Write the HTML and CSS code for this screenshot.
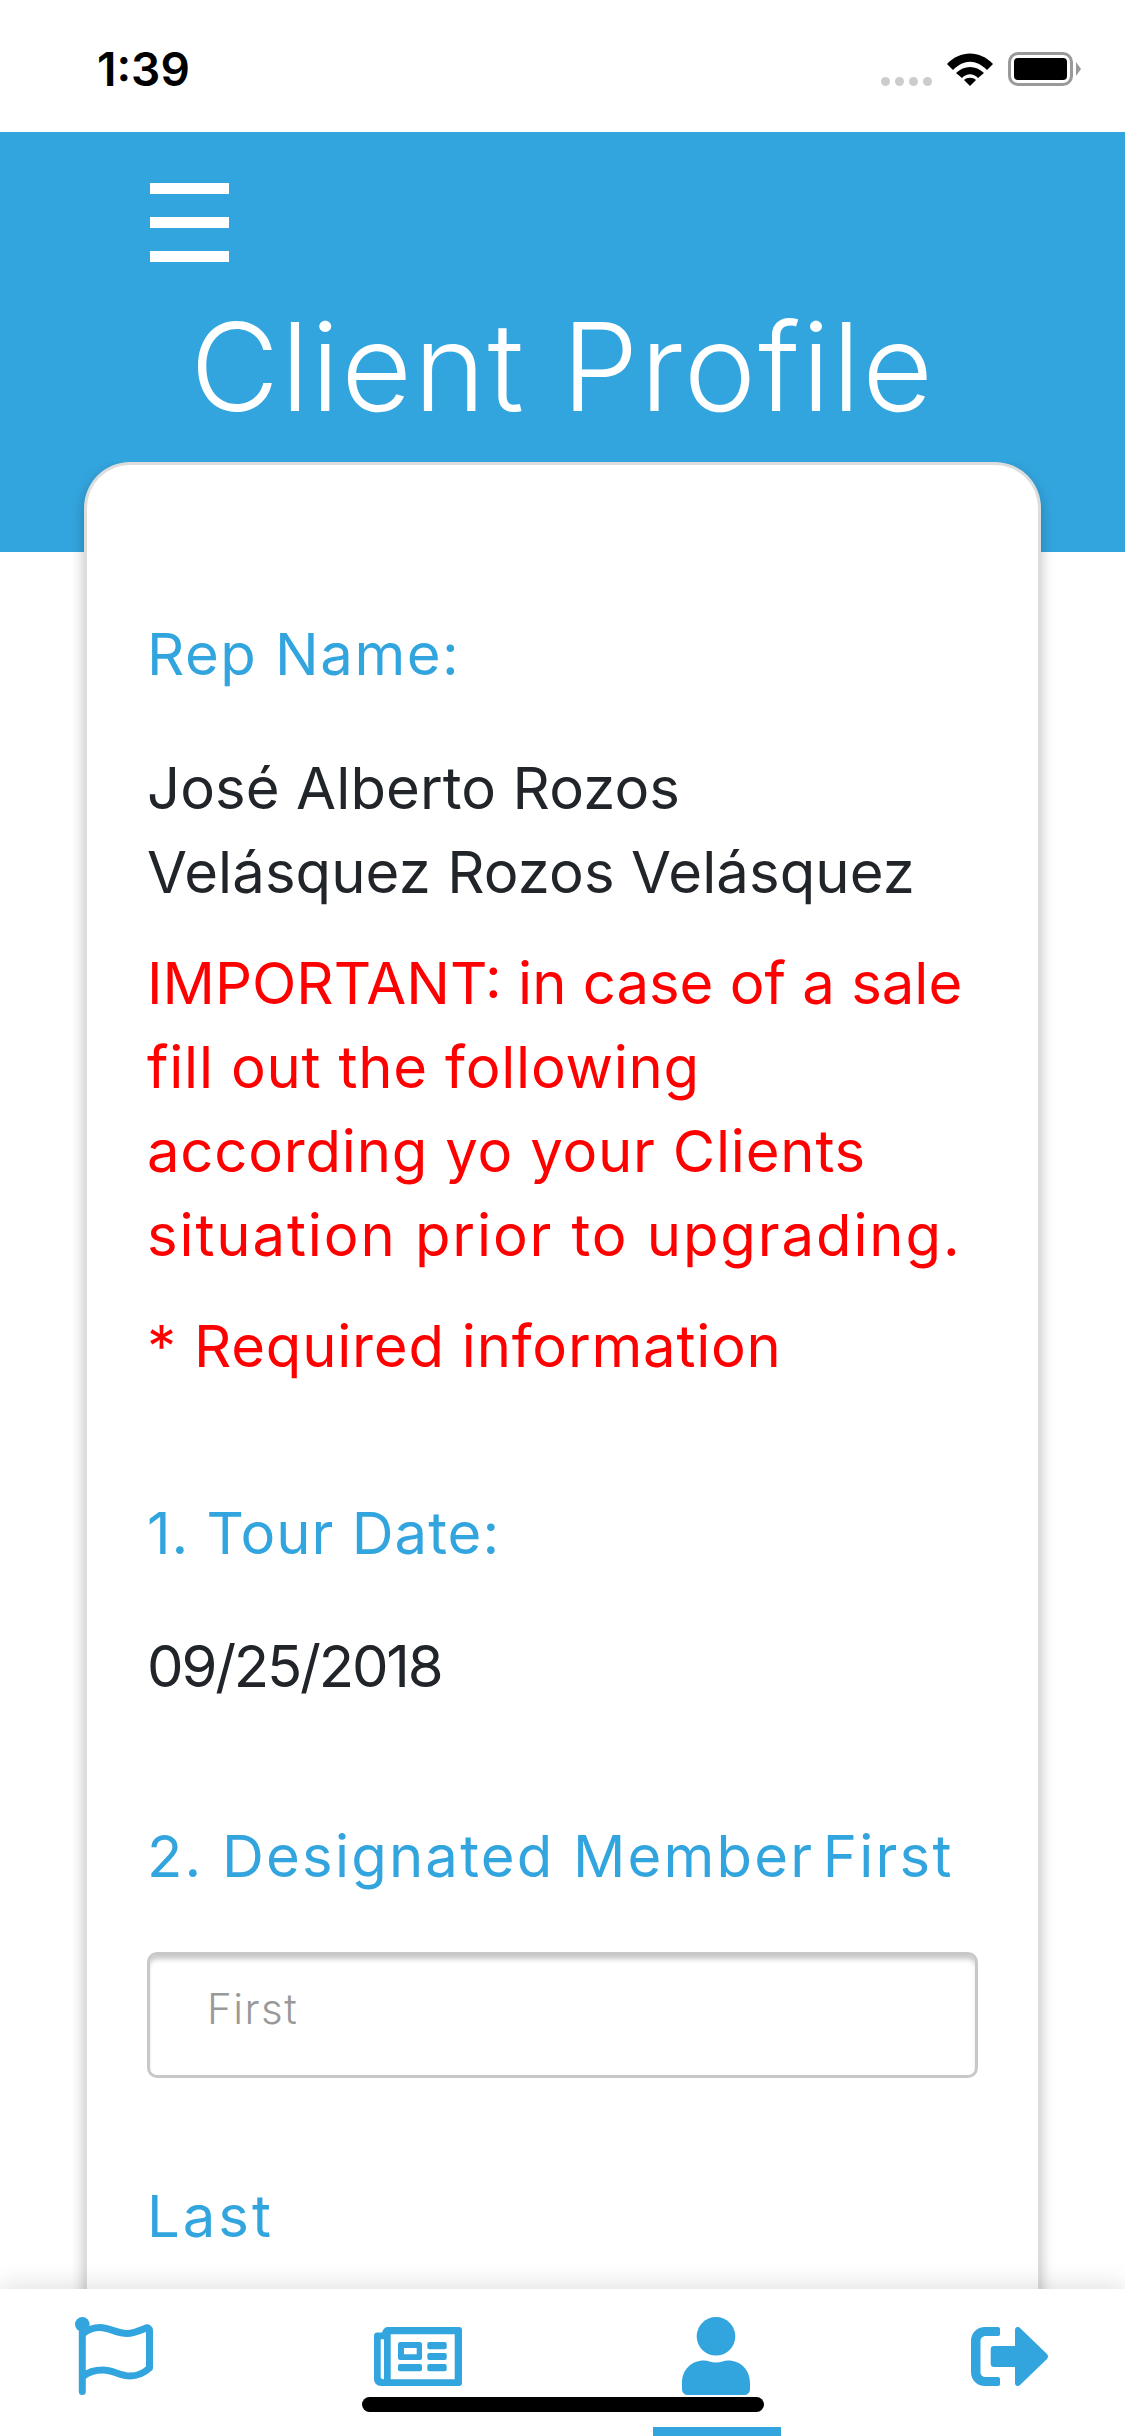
FILE: index.html
```html
<!DOCTYPE html>
<html lang="en">
<head>
    <meta charset="UTF-8">
    <title>Client Profile</title>
    <link rel="stylesheet" href="styles.css">
</head>
<body>
    <div class="app">
        <div class="status-bar">
            <span class="clock">1:39</span>
            <div class="status-icons">
                <div class="signal">
                    <span class="dot"></span><span class="dot"></span><span class="dot"></span><span class="dot"></span>
                </div>
                <svg class="wifi" viewBox="0 0 46 33" width="46" height="33">
                    <path d="M0 11 C13 -3 33 -3 46 11 L40 17 C29 6 17 6 6 17 Z"/>
                    <path d="M9 20 C17 12 29 12 37 20 L31 25 C26 20 20 20 15 25 Z"/>
                    <path d="M17 27 C20 24 26 24 29 27 L23 33 Z"/>
                </svg>
                <div class="battery"><div class="battery-level"></div></div>
            </div>
        </div>

        <header class="header">
            <div class="burger"><span></span><span></span><span></span></div>
            <h1 class="title">Client Profile</h1>
        </header>

        <main class="content">
            <section class="card">
                <h2 class="label">Rep Name:</h2>
                <p class="value">José Alberto Rozos<br>Velásquez Rozos Velásquez</p>
                <p class="notice"><span class="caps">IMPORTANT: in case of a sale</span><br>fill out the following<br>according yo your Clients<br><span class="wide">situation prior to upgrading.</span></p>
                <p class="notice required">* Required information</p>
                <h2 class="label tour">1. Tour Date:</h2>
                <p class="value date">09/25/2018</p>
                <h2 class="label member">2. Designated <span class="tight">Member First</span></h2>
                <input class="field" type="text" placeholder="First">
                <h2 class="label last">Last</h2>
            </section>
        </main>

        <nav class="tabbar">
            <a class="tab">
                <svg class="icon-line" viewBox="0 0 78 78" width="78" height="78">
                    <circle cx="7.3" cy="7.3" r="7.3"/>
                    <path d="M7.3 8 V74.5"/>
                    <path d="M8 16.5 C13 12.5 19 10.5 25 10.5 C34 10.5 42 16.5 52 16.5 C59 16.5 65 13.5 71 11 C73 10.5 74.5 11.5 74.5 13.5 V51 C69 56 62 59 55 59 C45 59 38 53 28 53 C20 53 13 55 8 59.5"/>
                </svg>
            </a>
            <a class="tab">
                <svg viewBox="0 0 88 59" width="88" height="59">
                    <path fill-rule="evenodd" d="M14 0 H85 C87 0 88 1 88 3 V56 C88 58 87 59 85 59 H7 C3 59 0 56 0 52 V9 C0 7 1 5.500 3 5.500 H8 C9 2 11 0 14 0 Z M6.700 12.300 V50 C6.700 51 7.500 52.300 10 52.300 V12.300 Z M16.700 7.300 V52.300 H80.700 V7.300 Z"/>
                    <path fill-rule="evenodd" d="M26 15 H46 C47 15 48 16 48 17 V31 C48 32 47 33 46 33 H26 C25 33 24 32 24 31 V17 C24 16 25 15 26 15 Z M30 21 V27.300 H42.700 V21 Z"/>
                    <rect x="53.300" y="15" width="19.400" height="7.300" rx="2"/>
                    <rect x="53.300" y="26" width="19.400" height="7" rx="2"/>
                    <rect x="53.300" y="37" width="19.400" height="7.300" rx="2"/>
                    <rect x="24" y="37" width="24" height="7.300" rx="2"/>
                </svg>
            </a>
            <a class="tab active">
                <svg viewBox="0 0 68 78" width="68" height="78">
                    <circle cx="34" cy="19.300" r="19.300"/>
                    <path d="M0 72 V66 C0 53 9 43.500 22 43.500 C26 43.500 29 45.500 34 45.500 C39 45.500 42 43.500 46 43.500 C59 43.500 68 53 68 66 V72 C68 76 65 78 62 78 H6 C3 78 0 76 0 72 Z"/>
                </svg>
            </a>
            <a class="tab">
                <svg viewBox="0 0 77 59" width="77" height="59">
                    <path d="M14 0 H27 C28.500 0 29 1 29 2 V7 C29 8 28.500 9 27 9 H15 C11.500 9 9.500 11.500 9.500 14 V45 C9.500 48 11.500 50 15 50 H27 C28.500 50 29 51 29 52 V57 C29 58 28.500 59 27 59 H14 C6 59 0 53 0 45 V14 C0 6 6 0 14 0 Z"/>
                    <path d="M44 3 C44 0 47 -1 49 1 L76 27 C77.300 28.500 77.300 30.500 76 32 L49 58 C47 60 44 59 44 56 V40 H23 C21 40 19.700 39 19.700 37 V22 C19.700 20 21 19 23 19 H44 Z"/>
                </svg>
            </a>
            <div class="home-indicator"></div>
        </nav>
    </div>
</body>
</html>
```

FILE: styles.css
```css
* {
    box-sizing: border-box;
}
body {
    margin: 0;
    background-color: #FFFFFF;
    font-family: 'Inter', sans-serif;
}
.app {
    display: flex;
    flex-direction: column;
    width: 1125px;
    height: 2436px;
    overflow: hidden;
}

/* status bar */
.status-bar {
    flex: none;
    display: flex;
    justify-content: space-between;
    align-items: center;
    height: 132px;
    padding: 6px 52px 0 97px;
}
.clock {
    font-size: 46px;
    font-weight: 600;
    color: #000000;
}
.status-icons {
    display: flex;
    align-items: flex-end;
}
.signal {
    display: flex;
    gap: 5px;
    margin-right: 15px;
}
.dot {
    width: 9px;
    height: 9px;
    border-radius: 50%;
    background-color: #CCCCCC;
}
.wifi {
    margin-right: 15px;
    fill: #000000;
}
.battery {
    position: relative;
    width: 65px;
    height: 34px;
    padding: 3px;
    border: 3px solid #999999;
    border-radius: 10px;
}
.battery::after {
    content: "";
    position: absolute;
    right: -11px;
    top: 7px;
    border-left: 5px solid #999999;
    border-top: 7px solid transparent;
    border-bottom: 7px solid transparent;
}
.battery-level {
    height: 100%;
    background-color: #000000;
    border-radius: 4px;
}

/* blue header */
.header {
    flex: none;
    height: 420px;
    margin-bottom: -90px;
    padding: 51px 0 0 150px;
    background-color: #33A5DE;
}
.burger {
    display: flex;
    flex-direction: column;
    gap: 23px;
    width: 79px;
}
.burger span {
    height: 11px;
    background-color: #FFFFFF;
}
.title {
    margin: 43px 0 0 -150px;
    font-size: 122px;
    font-weight: 300;
    line-height: 124px;
    letter-spacing: 1.8px;
    text-align: center;
    color: #FFFFFF;
}

/* card */
.content {
    flex: 1;
    min-height: 0;
    overflow: hidden;
    padding: 0 84px;
}
.card {
    position: relative;
    min-height: 2000px;
    padding: 147px 60px 0;
    background-color: #FFFFFF;
    border: 3px solid #DDDDDD;
    border-bottom: none;
    border-radius: 46px 46px 0 0;
    box-shadow: 0 6px 14px rgba(0, 0, 0, 0.25);
}
.label {
    margin: 0;
    font-size: 58px;
    font-weight: 400;
    line-height: 84px;
    letter-spacing: 1.5px;
    color: #33A5DE;
}
.tour {
    margin-top: 103px;
    letter-spacing: 1px;
}
.member {
    margin-top: 106px;
    letter-spacing: 2.2px;
}
.tight {
    word-spacing: -10px;
}
.last {
    margin-top: 96px;
    letter-spacing: 3px;
}
.value {
    margin: 50px 0 0;
    font-size: 58px;
    font-weight: 400;
    line-height: 84px;
    letter-spacing: 0.1px;
    color: #212529;
}
.value.date {
    margin-top: 49px;
    letter-spacing: -2.2px;
}
.notice {
    margin: 27px 0 0;
    font-size: 58px;
    font-weight: 400;
    line-height: 84px;
    letter-spacing: 0.8px;
    white-space: nowrap;
    color: #FF0000;
}
.caps {
    letter-spacing: 0;
}
.wide {
    letter-spacing: 1.9px;
}
.required {
    margin-top: 27px;
}
.field {
    display: block;
    width: 831px;
    height: 126px;
    margin: 54px 0 0;
    padding: 0 60px 14px 57px;
    border: 3px solid #C8C8C8;
    border-radius: 10px;
    box-shadow: inset 0 6px 5px -2px #C8C8C8;
    font-family: 'Inter', sans-serif;
    font-size: 42px;
    font-weight: 300;
    letter-spacing: 1.5px;
    outline: none;
}
.field::placeholder {
    color: #999999;
}

/* bottom tabs */
.tabbar {
    flex: none;
    position: relative;
    display: flex;
    justify-content: space-between;
    align-items: center;
    height: 147px;
    padding: 28px 77px 41px 75px;
    background-color: #FFFFFF;
    box-shadow: 0 -4px 24px rgba(0, 0, 0, 0.12);
}
.tab {
    display: flex;
}
.tab svg {
    fill: #33A5DE;
}
.tab .icon-line path {
    fill: none;
    stroke: #33A5DE;
    stroke-width: 7;
    stroke-linecap: round;
    stroke-linejoin: round;
}
.tab.active::after {
    content: "";
    position: absolute;
    left: 653px;
    bottom: 0;
    width: 128px;
    height: 9px;
    background-color: #33A5DE;
}
.home-indicator {
    position: absolute;
    left: 362px;
    bottom: 24px;
    width: 402px;
    height: 15px;
    background-color: #000000;
    border-radius: 8px;
}
```
